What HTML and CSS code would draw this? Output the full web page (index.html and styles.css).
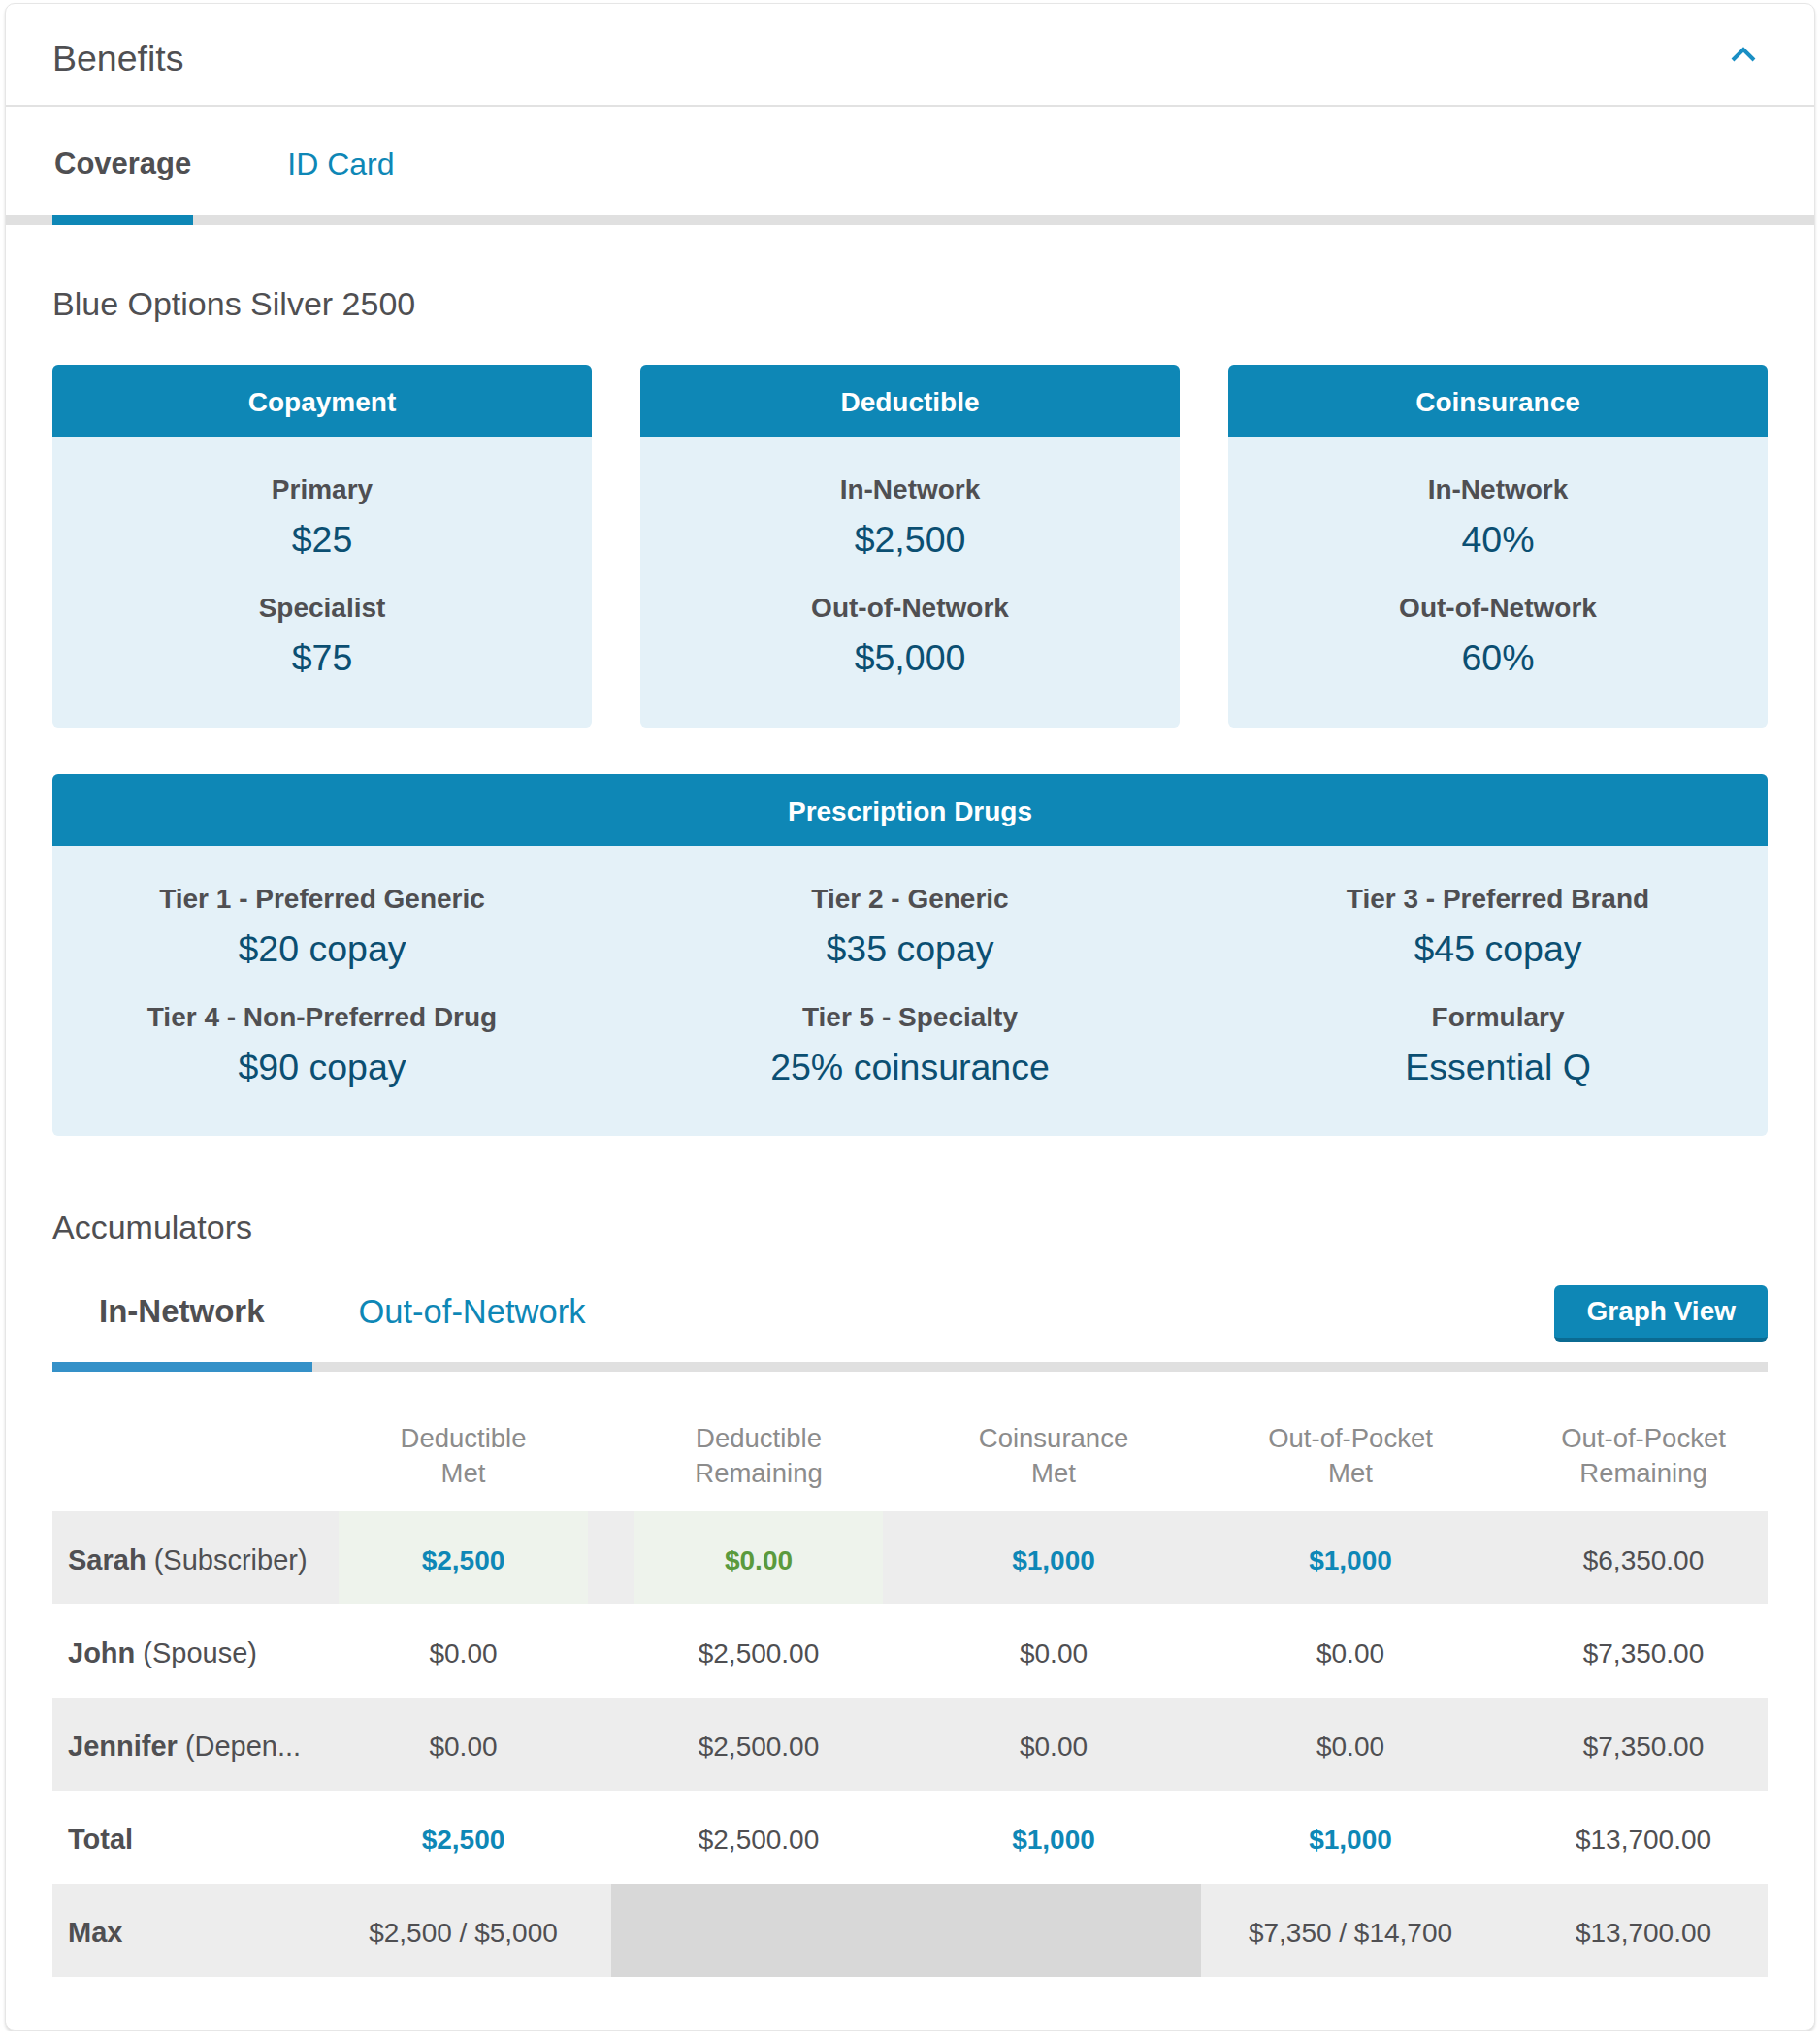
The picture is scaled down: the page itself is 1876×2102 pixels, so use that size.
FILE: index.html
```html
<!DOCTYPE html>
<html lang="en">
<head>
<meta charset="utf-8">
<title>Benefits</title>
<link rel="stylesheet" href="styles.css">
</head>
<body>
<div class="panel">
  <div class="panel-head">
    <h2 class="panel-title">Benefits</h2>
    <svg class="chevron" width="26" height="16" viewBox="0 0 26 16" aria-hidden="true">
      <polyline points="2,14 13,3 24,14" fill="none" stroke="#1a8fc4" stroke-width="4"/>
    </svg>
  </div>
  <div class="tabs">
    <a class="tab active">Coverage</a>
    <a class="tab">ID Card</a>
  </div>
  <div class="panel-body">
    <h3 class="plan">Blue Options Silver 2500</h3>
    <div class="cards">
      <div class="card">
        <div class="card-head">Copayment</div>
        <div class="card-body">
          <div class="item"><div class="label">Primary</div><div class="value">$25</div></div>
          <div class="item"><div class="label">Specialist</div><div class="value">$75</div></div>
        </div>
      </div>
      <div class="card">
        <div class="card-head">Deductible</div>
        <div class="card-body">
          <div class="item"><div class="label">In-Network</div><div class="value">$2,500</div></div>
          <div class="item"><div class="label">Out-of-Network</div><div class="value">$5,000</div></div>
        </div>
      </div>
      <div class="card">
        <div class="card-head">Coinsurance</div>
        <div class="card-body">
          <div class="item"><div class="label">In-Network</div><div class="value">40%</div></div>
          <div class="item"><div class="label">Out-of-Network</div><div class="value">60%</div></div>
        </div>
      </div>
    </div>
    <div class="card rx">
      <div class="card-head">Prescription Drugs</div>
      <div class="rx-body">
        <div class="rx-item"><div class="label">Tier 1 - Preferred Generic</div><div class="value">$20 copay</div></div>
        <div class="rx-item"><div class="label">Tier 2 - Generic</div><div class="value">$35 copay</div></div>
        <div class="rx-item"><div class="label">Tier 3 - Preferred Brand</div><div class="value">$45 copay</div></div>
        <div class="rx-item"><div class="label">Tier 4 - Non-Preferred Drug</div><div class="value">$90 copay</div></div>
        <div class="rx-item"><div class="label">Tier 5 - Specialty</div><div class="value">25% coinsurance</div></div>
        <div class="rx-item"><div class="label">Formulary</div><div class="value">Essential Q</div></div>
      </div>
    </div>

    <h3 class="section-title">Accumulators</h3>
    <div class="acc-bar">
      <a class="acc-tab active">In-Network</a>
      <a class="acc-tab">Out-of-Network</a>
      <button class="graph-btn" type="button">Graph View</button>
    </div>

    <div class="table">
      <div class="thead">
        <div class="th"></div>
        <div class="th">Deductible<br>Met</div>
        <div class="th">Deductible<br>Remaining</div>
        <div class="th">Coinsurance<br>Met</div>
        <div class="th">Out-of-Pocket<br>Met</div>
        <div class="th last">Out-of-Pocket<br>Remaining</div>
      </div>
      <div class="row alt">
        <div class="cell name"><b>Sarah</b> (Subscriber)</div>
        <div class="cell hl"><span class="blue">$2,500</span></div>
        <div class="cell hl"><span class="green">$0.00</span></div>
        <div class="cell"><span class="blue">$1,000</span></div>
        <div class="cell"><span class="blue">$1,000</span></div>
        <div class="cell last">$6,350.00</div>
      </div>
      <div class="row">
        <div class="cell name"><b>John</b> (Spouse)</div>
        <div class="cell">$0.00</div>
        <div class="cell">$2,500.00</div>
        <div class="cell">$0.00</div>
        <div class="cell">$0.00</div>
        <div class="cell last">$7,350.00</div>
      </div>
      <div class="row alt">
        <div class="cell name"><b>Jennifer</b> (Depen...</div>
        <div class="cell">$0.00</div>
        <div class="cell">$2,500.00</div>
        <div class="cell">$0.00</div>
        <div class="cell">$0.00</div>
        <div class="cell last">$7,350.00</div>
      </div>
      <div class="row">
        <div class="cell name"><b>Total</b></div>
        <div class="cell"><span class="blue">$2,500</span></div>
        <div class="cell">$2,500.00</div>
        <div class="cell"><span class="blue">$1,000</span></div>
        <div class="cell"><span class="blue">$1,000</span></div>
        <div class="cell last">$13,700.00</div>
      </div>
      <div class="row alt">
        <div class="cell name"><b>Max</b></div>
        <div class="cell">$2,500 / $5,000</div>
        <div class="cell blank"></div>
        <div class="cell">$7,350 / $14,700</div>
        <div class="cell last">$13,700.00</div>
      </div>
    </div>
  </div>
</div>
</body>
</html>
```

FILE: styles.css
```css
* { box-sizing: border-box; }

body {
  margin: 0;
  padding: 3px 5px 0;
  background: #ffffff;
  font-family: "Liberation Sans", Arial, sans-serif;
  color: #4f4f52;
}

.panel {
  background: #fff;
  border: 1px solid #e6e6e6;
  border-radius: 10px;
  box-shadow: 0 2px 3px rgba(0, 0, 0, 0.14);
}

.panel-head {
  display: flex;
  align-items: center;
  justify-content: space-between;
  padding: 36px 60px 28px 48px;
  border-bottom: 2px solid #e2e2e2;
}

.panel-title {
  margin: 0;
  font-size: 37.5px;
  line-height: 40px;
  font-weight: normal;
  color: #4f4f52;
}

.chevron { display: block; margin-bottom: 8px; }

.tabs {
  display: flex;
  gap: 95px;
  padding: 0 48px;
  border-bottom: 10px solid #e0e0e0;
}

.tab {
  padding: 39px 2px 33px;
  margin-bottom: -10px;
  border-bottom: 10px solid transparent;
  font-size: 32px;
  line-height: 40px;
  color: #0e87b6;
}

.tab.active {
  font-size: 31px;
  font-weight: bold;
  color: #4f4f52;
  border-bottom-color: #0e87b6;
}

.panel-body {
  padding: 0 48px 55px;
}

.plan {
  margin: 61px 0 43px;
  font-size: 34px;
  line-height: 40px;
  font-weight: normal;
}

.cards {
  display: grid;
  grid-template-columns: repeat(3, 1fr);
  gap: 50px;
}

.card {
  background: #e4f1f8;
  border-radius: 6px;
  overflow: hidden;
}

.card-head {
  height: 74px;
  padding-top: 4px;
  display: flex;
  align-items: center;
  justify-content: center;
  background: #0e87b6;
  color: #fff;
  font-size: 28px;
  font-weight: bold;
}

.card-body {
  padding: 37px 16px 50px;
  text-align: center;
}

.item + .item { margin-top: 31px; }

.label {
  font-size: 28px;
  line-height: 36px;
  font-weight: bold;
  color: #4f4f52;
}

.value {
  margin-top: 11px;
  font-size: 37.5px;
  line-height: 44px;
  color: #0b4f72;
}

.rx { margin-top: 48px; }

.rx-body {
  display: grid;
  grid-template-columns: repeat(3, 1fr);
  column-gap: 50px;
  row-gap: 31px;
  padding: 37px 0 49px;
  text-align: center;
}

.section-title {
  margin: 74px 0 0;
  font-size: 34px;
  line-height: 40px;
  font-weight: normal;
}

.acc-bar {
  display: flex;
  align-items: flex-start;
  border-bottom: 10px solid #e0e0e0;
}

.acc-tab {
  padding: 47px 48px 32px;
  margin-bottom: -10px;
  border-bottom: 10px solid transparent;
  font-size: 34.5px;
  line-height: 40px;
  color: #0e87b6;
}

.acc-tab.active {
  font-size: 33px;
  padding: 47px 49px 32px 48px;
  font-weight: bold;
  color: #4f4f52;
  border-bottom-color: #3591c8;
}

.graph-btn {
  margin-left: auto;
  margin-top: 40px;
  height: 58px;
  padding: 0 33px;
  border: none;
  border-bottom: 4px solid #0b6b92;
  border-radius: 6px;
  background: #0e87b6;
  color: #fff;
  font-family: inherit;
  font-size: 28px;
  font-weight: bold;
}

.table { font-size: 28px; }

.thead,
.row {
  display: grid;
  grid-template-columns: 271px 305px 304px 304px 308px 1fr;
}

.thead {
  padding: 51px 0 21px;
  font-size: 27.5px;
  line-height: 36px;
  color: #8c8c8c;
  text-align: center;
}

.row {
  height: 96px;
}

.row.alt { background: #ededed; }

.cell {
  display: flex;
  align-items: center;
  justify-content: center;
  padding-top: 5px;
  color: #4f4f52;
  white-space: nowrap;
}

.th.last,
.cell.last { padding-left: 20px; }

.cell.name {
  display: block;
  padding: 5px 8px 0 16px;
  font-size: 29px;
  line-height: 91px;
  overflow: hidden;
  text-overflow: ellipsis;
}

.cell.hl {
  margin: 0 24px;
  background: #eef3ec;
}

.cell.blank {
  grid-column: span 2;
  background: #d8d8d8;
}

.blue { color: #0e87b6; font-weight: bold; }
.green { color: #5b9a3d; font-weight: bold; }
```
